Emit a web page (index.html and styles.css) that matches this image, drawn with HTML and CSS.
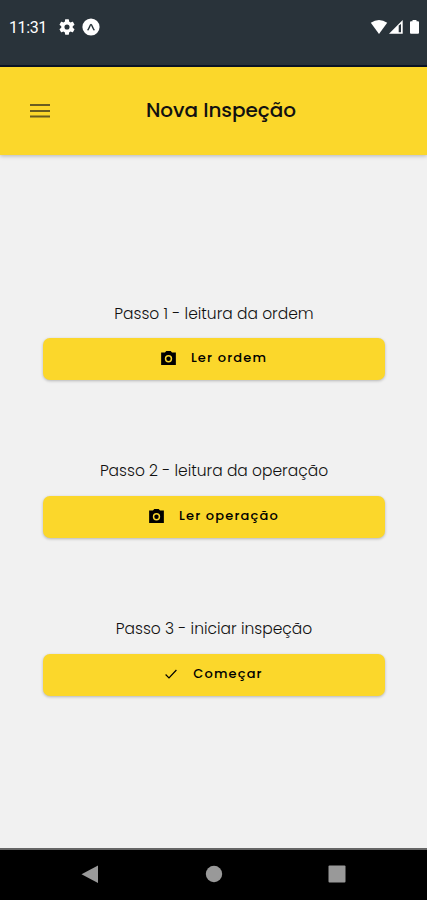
FILE: index.html
```html
<!DOCTYPE html>
<html lang="pt-BR">
<head>
<meta charset="utf-8">
<meta name="viewport" content="width=device-width, initial-scale=1">
<title>Nova Inspeção</title>
<link rel="stylesheet" href="styles.css">
</head>
<body>
<div class="status">
  <span class="time">11:31</span>
  <svg class="gear" viewBox="2 2 20 20"><path fill="#fff" fill-rule="evenodd" d="M19.14 12.94c.04-.3.06-.61.06-.94 0-.32-.02-.64-.07-.94l2.03-1.58a.49.49 0 0 0 .12-.61l-1.92-3.32a.49.49 0 0 0-.59-.22l-2.39.96c-.5-.38-1.03-.7-1.62-.94l-.36-2.54a.48.48 0 0 0-.48-.41h-3.84c-.24 0-.43.17-.47.41l-.36 2.54c-.59.24-1.13.57-1.62.94l-2.39-.96a.48.48 0 0 0-.59.22L2.74 8.87c-.12.21-.08.47.12.61l2.03 1.58c-.05.3-.09.63-.09.94s.02.64.07.94l-2.03 1.58a.49.49 0 0 0-.12.61l1.92 3.32c.12.22.37.29.59.22l2.39-.96c.5.38 1.03.7 1.62.94l.36 2.54c.05.24.24.41.48.41h3.84c.24 0 .44-.17.47-.41l.36-2.54c.59-.24 1.13-.56 1.62-.94l2.39.96c.22.08.47 0 .59-.22l1.92-3.32a.48.48 0 0 0-.12-.61l-2.01-1.58zM12 15.2a3.2 3.2 0 1 1 0-6.4 3.2 3.2 0 0 1 0 6.4z"/></svg>
  <svg class="expo" viewBox="0 0 18 18"><circle cx="9" cy="9" r="8.6" fill="#fff"/><path d="M6 11.700C7.300 10.200 8 6.600 9 6.600s1.700 3.600 3 5.100" fill="none" stroke="#263238" stroke-width="1.500" stroke-linecap="round"/></svg>
  <svg class="signals" viewBox="0 0 50 18">
    <path fill="#fff" d="M.8 4.800Q9-.8 17.200 4.800L9 16z"/>
    <path fill="#fff" fill-rule="evenodd" d="M19 15.700L32.700 2v13.700zM28.700 7.600v6.600H31V6z"/>
    <path fill="#fff" d="M40 4.300q0-1 1-1h1.500V2h4v1.300H48q1 0 1 1v10.400q0 1-1 1h-7q-1 0-1-1z"/>
  </svg>
</div>
<header class="appbar">
  <svg class="menu" viewBox="0 0 20 16"><path d="M0 2h20M0 8h20M0 13.500h20" stroke="#6a5d20" stroke-width="2"/></svg>
  <h1>Nova Inspeção</h1>
</header>
<main>
  <section class="step first">
    <p>Passo 1 - leitura da ordem</p>
    <button type="button"><svg class="camera" viewBox="2 2 20 19"><path fill-rule="evenodd" d="M9 2L7.200 4H2v17h20V4h-5.200L15 2zM12 17.500a5 5 0 1 1 0-10 5 5 0 0 1 0 10z"/><circle cx="12" cy="12.500" r="3"/></svg><span>Ler ordem</span></button>
  </section>
  <section class="step">
    <p>Passo 2 - leitura da operação</p>
    <button type="button"><svg class="camera" viewBox="2 2 20 19"><path fill-rule="evenodd" d="M9 2L7.200 4H2v17h20V4h-5.200L15 2zM12 17.500a5 5 0 1 1 0-10 5 5 0 0 1 0 10z"/><circle cx="12" cy="12.500" r="3"/></svg><span>Ler operação</span></button>
  </section>
  <section class="step">
    <p>Passo 3 - iniciar inspeção</p>
    <button type="button"><svg class="check" viewBox="0 0 12 10"><path d="M.6 5.500L4 8.900 11.400 1" fill="none" stroke="#000" stroke-width="1.200"/></svg><span>Começar</span></button>
  </section>
</main>
<nav class="navbar">
  <svg viewBox="0 0 18 18"><path d="M17 .5v17.500L.5 9.200z"/></svg>
  <svg viewBox="0 0 18 18"><circle cx="9" cy="9" r="8.200"/></svg>
  <svg viewBox="0 0 18 18"><rect x=".5" y=".5" width="17" height="17" rx="1"/></svg>
</nav>
</body>
</html>
```
FILE: styles.css
```css
* { box-sizing: border-box; }
body {
  margin: 0;
  height: 900px;
  display: flex;
  flex-direction: column;
  background: #f1f1f1;
  font-family: Poppins, Inter, sans-serif;
  color: #111;
}
svg { display: block; flex: none; }
.status {
  height: 67px;
  padding: 0 7px 11px 9px;
  display: flex;
  align-items: center;
  background: #29333a;
  border-bottom: 2px solid #0b1426;
}
.time {
  width: 50px;
  padding-top: 2px;
  font: 400 16px/20px Roboto, sans-serif;
  letter-spacing: -0.4px;
  color: #fff;
}
.gear { width: 16px; height: 16px; }
.expo { width: 18px; height: 18px; margin-left: 7px; }
.signals { width: 50px; height: 18px; margin-left: auto; }
.appbar {
  height: 88px;
  padding: 0 0 2px 30px;
  display: flex;
  align-items: center;
  background: #fbd72b;
  box-shadow: 0 1px 4px rgba(0, 0, 0, .25);
}
.menu { width: 20px; height: 16px; margin-top: 2px; }
h1 {
  margin: 0 0 0 96px;
  font-size: 20px;
  font-weight: 500;
  line-height: 30px;
  letter-spacing: -0.05px;
  white-space: nowrap;
}
main {
  flex: 1;
  padding: 145px 42px 0 43px;
  display: flex;
  flex-direction: column;
  gap: 78px;
}
.step { height: 80px; }
.step p {
  margin: 0;
  padding-bottom: 12px;
  text-align: center;
  font-size: 15.500px;
  font-weight: 300;
  line-height: 26px;
  white-space: nowrap;
}
.first p { padding: 1px 0 11px; }
button {
  width: 100%;
  height: 42px;
  padding: 0 0 2px;
  display: flex;
  align-items: center;
  justify-content: center;
  border: 0;
  border-radius: 7px;
  background: #fbd72b;
  box-shadow: 0 1px 3px rgba(0, 0, 0, .25);
  font: inherit;
  font-size: 13px;
  font-weight: 500;
  letter-spacing: 1.150px;
  color: #000;
}
.camera { width: 15px; height: 14px; margin-right: 15px; }
.check { width: 12px; height: 10px; margin-right: 16px; }
.navbar {
  height: 52px;
  padding: 0 81px 2px;
  display: flex;
  align-items: center;
  justify-content: space-between;
  background: #000;
  border-top: 2px solid #666;
}
.navbar svg { width: 18px; height: 18px; fill: #999; }
```
